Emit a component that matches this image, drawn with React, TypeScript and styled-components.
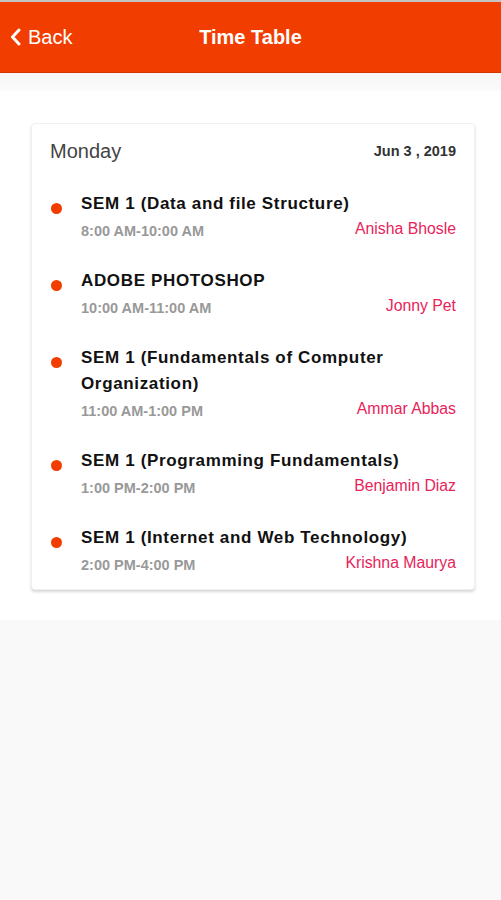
import React from "react";
import styled, { createGlobalStyle } from "styled-components";

const GlobalStyle = createGlobalStyle`
  html, body {
    margin: 0;
    padding: 0;
    background: #f9f9f9;
    font-family: "Liberation Sans", Arial, sans-serif;
  }
`;

const Page = styled.div`
  display: flex;
  flex-direction: column;
  min-height: 898px;
  border-top: 2px solid #c4c4c4;
  background: #f9f9f9;
`;

const Header = styled.header`
  display: grid;
  grid-template-columns: 1fr auto 1fr;
  align-items: center;
  height: 70px;
  background: #f23d00;
  border-bottom: 1px solid #d93300;
  color: #fff;
`;

const BackButton = styled.button`
  display: flex;
  align-items: center;
  gap: 7px;
  padding: 0 0 0 10px;
  border: none;
  background: none;
  color: #fff;
  font-family: inherit;
  font-size: 20px;
  cursor: pointer;
  justify-self: start;
`;

const Title = styled.h1`
  margin: 0;
  font-size: 20px;
  font-weight: bold;
  color: #fff;
`;

const TopStrip = styled.div`
  height: 18px;
  background: linear-gradient(#f6f6f6, #fbfbfb);
`;

const Content = styled.main`
  background: #fff;
  padding: 32px 26px 30px 31px;
`;

const Card = styled.section`
  background: #fff;
  border-radius: 4px;
  border: 1px solid #f0f0f0;
  box-shadow: 0 2px 3px rgba(0, 0, 0, 0.16);
  padding: 14px 18px 14px 18px;
`;

const DayRow = styled.div`
  display: flex;
  justify-content: space-between;
  align-items: center;
  height: 26px;
  margin-bottom: 27px;
`;

const Day = styled.span`
  font-size: 20px;
  color: #444;
`;

const DateText = styled.span`
  font-size: 14.5px;
  font-weight: bold;
  color: #333;
`;

const Item = styled.div`
  display: grid;
  grid-template-columns: 31px 1fr;
  & + & {
    margin-top: 27px;
  }
`;

const Dot = styled.span`
  width: 11px;
  height: 11px;
  border-radius: 50%;
  background: #f23d00;
  margin: 12px 0 0 1px;
`;

const Subject = styled.div`
  font-size: 17px;
  font-weight: bold;
  letter-spacing: 0.65px;
  line-height: 26px;
  color: #111;
`;

const Meta = styled.div`
  display: flex;
  justify-content: space-between;
  align-items: flex-start;
  margin-top: 3px;
  height: 21px;
`;

const Time = styled.span`
  font-size: 14.5px;
  font-weight: bold;
  color: #999;
  padding-top: 3px;
`;

const Teacher = styled.span`
  font-size: 15.8px;
  color: #e8235a;
`;

const Rest = styled.div`
  flex: 1;
  background: #f9f9f9;
`;

const lectures = [
  { subject: "SEM 1 (Data and file Structure)", time: "8:00 AM-10:00 AM", teacher: "Anisha Bhosle" },
  { subject: "ADOBE PHOTOSHOP", time: "10:00 AM-11:00 AM", teacher: "Jonny Pet" },
  { subject: "SEM 1 (Fundamentals of Computer Organization)", time: "11:00 AM-1:00 PM", teacher: "Ammar Abbas" },
  { subject: "SEM 1 (Programming Fundamentals)", time: "1:00 PM-2:00 PM", teacher: "Benjamin Diaz" },
  { subject: "SEM 1 (Internet and Web Technology)", time: "2:00 PM-4:00 PM", teacher: "Krishna Maurya" },
];

const App = () => {
  return (
    <Page>
      <GlobalStyle />
      <Header>
        <BackButton>
          <svg width="11" height="18" viewBox="0 0 11 18">
            <path d="M9 2 L2.5 9 L9 16" fill="none" stroke="#fff" strokeWidth="3" strokeLinecap="round" strokeLinejoin="round" />
          </svg>
          Back
        </BackButton>
        <Title>Time Table</Title>
        <span />
      </Header>
      <TopStrip />
      <Content>
        <Card>
          <DayRow>
            <Day>Monday</Day>
            <DateText>Jun 3 , 2019</DateText>
          </DayRow>
          {lectures.map(l => (
            <Item key={l.subject}>
              <Dot />
              <div>
                <Subject>{l.subject}</Subject>
                <Meta>
                  <Time>{l.time}</Time>
                  <Teacher>{l.teacher}</Teacher>
                </Meta>
              </div>
            </Item>
          ))}
        </Card>
      </Content>
      <Rest />
    </Page>
  );
};

export default App;
